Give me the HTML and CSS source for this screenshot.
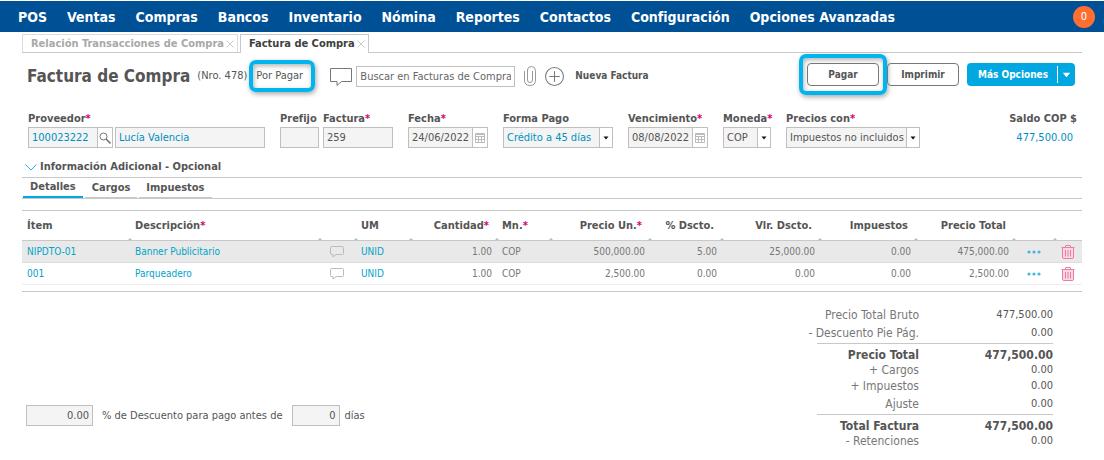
FILE: index.html
```html
<!DOCTYPE html>
<html lang="es">
<head>
<meta charset="utf-8">
<meta name="viewport" content="width=device-width, initial-scale=1">
<title>Factura de Compra</title>
<link rel="stylesheet" href="styles.css">
</head>
<body>
<svg class="defs" aria-hidden="true">
  <symbol id="i-bubble" viewBox="0 0 22 19"><path d="M.5 1.500h21v13H11.500l-4.500 4v-4H.5z" fill="none" stroke="currentColor"/></symbol>
  <symbol id="i-note" viewBox="0 0 14 12"><path d="M2 .5h10.500q1 0 1 1v6q0 1-1 1H6l-3 2.500V8.500H2q-1.500 0-1.500-1v-6q0-1 1.500-1z" fill="none" stroke="currentColor"/></symbol>
  <symbol id="i-cal" viewBox="0 0 10 10"><path d="M.5.5h9v9h-9zM.5 1.500h9M.5 3.500h9M.5 6.500h9M3.500 3.500v6M6.500 3.500v6" fill="none" stroke="currentColor"/></symbol>
  <symbol id="i-trash" viewBox="0 0 14 14"><path d="M1.500 2.500h11V12q0 1.500-1.500 1.500H3Q1.500 13.500 1.500 12z" fill="#fbd9e2"/><path d="M.5 2.500h13M4.500 2.500V1q0-.5.500-.5h4q.5 0 .5.500v1.500M1.500 2.500V12q0 1.500 1.500 1.500h8q1.500 0 1.500-1.500V2.500M4.500 5v6.500M7 5v6.500M9.500 5v6.500" fill="none" stroke="currentColor"/></symbol>
  <symbol id="i-dots" viewBox="0 0 14 4"><g fill="currentColor"><circle cx="2" cy="2" r="1.600"/><circle cx="7" cy="2" r="1.600"/><circle cx="12" cy="2" r="1.600"/></g></symbol>
  <symbol id="i-arrow" viewBox="0 0 6 4"><path d="M.5.5h5L3 3.500z" fill="currentColor"/></symbol>
</svg>
<nav class="nav">
  <a href="#">POS</a><a href="#">Ventas</a><a href="#">Compras</a><a href="#">Bancos</a><a href="#">Inventario</a><a href="#">Nómina</a><a href="#">Reportes</a><a href="#">Contactos</a><a href="#">Configuración</a><a href="#">Opciones Avanzadas</a>
  <button class="count" type="button">0</button>
</nav>
<main class="page">
  <div class="doctabs">
    <div class="doctab"><a href="#">Relación Transacciones de Compra</a><button class="close" type="button" aria-label="Cerrar"><svg viewBox="0 0 8 8"><path d="M.5.5l7 7M7.500.5l-7 7"/></svg></button></div>
    <div class="doctab current"><a href="#">Factura de Compra</a><button class="close" type="button" aria-label="Cerrar"><svg viewBox="0 0 8 8"><path d="M.5.5l7 7M7.500.5l-7 7"/></svg></button></div>
  </div>

  <header class="head">
    <h1>Factura de Compra</h1>
    <span class="number">(Nro. 478)</span>
    <span class="status glow">Por Pagar</span>
    <button class="icon comment" type="button" aria-label="Comentarios"><svg><use href="#i-bubble"/></svg></button>
    <input class="search" type="text" aria-label="Buscar en Facturas de Compra" placeholder="Buscar en Facturas de Compra">
    <button class="icon clip" type="button" aria-label="Adjuntar"><svg viewBox="0 0 12 20"><path d="M3.500 5v9q0 2.500 2.500 2.500T8.500 14V4Q8.500.5 4.500.5T.5 4.500V14q0 5.500 5.500 5.500t5.500-5.500V5" transform="translate(12 0) scale(-1 1)"/></svg></button>
    <button class="new" type="button"><svg viewBox="0 0 18 18"><circle cx="9" cy="9" r="8.500"/><path d="M9 4v10M4 9h10"/></svg>Nueva Factura</button>
    <div class="actions">
      <span class="glow pay"><button class="btn" type="button">Pagar</button></span>
      <button class="btn" type="button">Imprimir</button>
      <button class="more" type="button"><span>Más Opciones</span><i><svg><use href="#i-arrow"/></svg></i></button>
    </div>
  </header>

  <form class="fields">
    <div class="field supplier">
      <label for="prov">Proveedor<b>*</b></label>
      <div class="pair">
        <span class="box code"><input class="link" id="prov" type="text" value="100023222"><button type="button" aria-label="Buscar proveedor"><svg class="lens" viewBox="0 0 12 12"><circle cx="4.500" cy="4.500" r="3.500"/><path d="M7 7l4.500 4.500" stroke-width="1.600"/></svg></button></span>
        <span class="box name"><input class="link" type="text" aria-label="Nombre del proveedor" value="Lucía Valencia"></span>
      </div>
    </div>
    <div class="field prefix"><label for="pre">Prefijo</label><span class="box"><input id="pre" type="text"></span></div>
    <div class="field invoice"><label for="fac">Factura<b>*</b></label><span class="box"><input id="fac" type="text" value="259"></span></div>
    <div class="field date"><label for="fec">Fecha<b>*</b></label><span class="box"><input id="fec" type="text" value="24/06/2022"><button type="button" aria-label="Elegir fecha"><svg class="cal"><use href="#i-cal"/></svg></button></span></div>
    <div class="field terms"><label for="for">Forma Pago</label><span class="box"><select class="link" id="for"><option>Crédito a 45 días</option></select><i><svg class="arrow"><use href="#i-arrow"/></svg></i></span></div>
    <div class="field date"><label for="ven">Vencimiento<b>*</b></label><span class="box"><input id="ven" type="text" value="08/08/2022"><button type="button" aria-label="Elegir vencimiento"><svg class="cal"><use href="#i-cal"/></svg></button></span></div>
    <div class="field currency"><label for="mon">Moneda<b>*</b></label><span class="box"><select id="mon"><option>COP</option></select><i><svg class="arrow"><use href="#i-arrow"/></svg></i></span></div>
    <div class="field prices"><label for="pcon">Precios con<b>*</b></label><span class="box"><select id="pcon"><option>Impuestos no incluidos</option></select><i><svg class="arrow"><use href="#i-arrow"/></svg></i></span></div>
    <div class="field balance"><span class="cap">Saldo COP $</span><a href="#">477,500.00</a></div>
  </form>

  <button class="extra" type="button"><svg viewBox="0 0 12 7"><path d="M.5.5L6 6l5.500-5.500"/></svg>Información Adicional - Opcional</button>

  <div class="subtabs">
    <button class="on" type="button">Detalles</button><button type="button">Cargos</button><button type="button">Impuestos</button>
  </div>

  <div class="tablewrap">
  <table class="items">
    <colgroup><col class="w108"><col class="w190"><col class="w36"><col class="w55"><col class="w86"><col class="w54"><col class="w99"><col class="w72"><col class="w98"><col class="w96"><col class="w98"><col class="w41"><col class="w27"></colgroup>
    <thead><tr>
      <th>Ítem</th><th>Descripción<b>*</b></th><th></th><th>UM</th><th class="r">Cantidad<b>*</b></th><th>Mn.<b>*</b></th><th class="r">Precio Un.<b>*</b></th><th class="r">% Dscto.</th><th class="r">Vlr. Dscto.</th><th class="r">Impuestos</th><th class="r">Precio Total</th><th></th><th></th>
    </tr></thead>
    <tbody>
    <tr class="sel">
      <td><a href="#">NIPDTO-01</a></td><td><a href="#">Banner Publicitario</a></td><td class="c"><button class="icon" type="button" aria-label="Nota"><svg class="note"><use href="#i-note"/></svg></button></td><td><a href="#">UNID</a></td><td class="r">1.00</td><td>COP</td><td class="r">500,000.00</td><td class="r">5.00</td><td class="r">25,000.00</td><td class="r">0.00</td><td class="r">475,000.00</td><td class="c"><button class="icon" type="button" aria-label="Más"><svg class="dots"><use href="#i-dots"/></svg></button></td><td class="c"><button class="icon" type="button" aria-label="Eliminar"><svg class="trash"><use href="#i-trash"/></svg></button></td>
    </tr>
    <tr>
      <td><a href="#">001</a></td><td><a href="#">Parqueadero</a></td><td class="c"><button class="icon" type="button" aria-label="Nota"><svg class="note"><use href="#i-note"/></svg></button></td><td><a href="#">UNID</a></td><td class="r">1.00</td><td>COP</td><td class="r">2,500.00</td><td class="r">0.00</td><td class="r">0.00</td><td class="r">0.00</td><td class="r">2,500.00</td><td class="c"><button class="icon" type="button" aria-label="Más"><svg class="dots"><use href="#i-dots"/></svg></button></td><td class="c"><button class="icon" type="button" aria-label="Eliminar"><svg class="trash"><use href="#i-trash"/></svg></button></td>
    </tr>
    </tbody>
  </table>
  </div>

  <footer class="foot">
    <div class="discount">
      <span class="box pct"><input id="pct" type="text" value="0.00"></span>
      <label for="pct">% de Descuento para pago antes de</label>
      <span class="box days"><input id="dias" type="text" value="0"></span>
      <label for="dias">días</label>
    </div>
    <dl class="totals">
      <div><dt>Precio Total Bruto</dt><dd>477,500.00</dd></div>
      <div><dt>- Descuento Pie Pág.</dt><dd>0.00</dd></div>
      <div class="sum"><dt>Precio Total</dt><dd>477,500.00</dd></div>
      <div class="tight"><dt>+ Cargos</dt><dd>0.00</dd></div>
      <div><dt>+ Impuestos</dt><dd>0.00</dd></div>
      <div><dt>Ajuste</dt><dd>0.00</dd></div>
      <div class="sum"><dt>Total Factura</dt><dd>477,500.00</dd></div>
      <div class="tight"><dt>- Retenciones</dt><dd>0.00</dd></div>
    </dl>
  </footer>
</main>
</body>
</html>
```

FILE: styles.css
```css
* { box-sizing: border-box; }
body {
  margin: 0;
  padding-top: 1px;
  background: #fff;
  color: #555;
  font: 11px/14px "DejaVu Sans Condensed", "DejaVu Sans", sans-serif;
}
button, input, select { font: inherit; color: inherit; margin: 0; }
button { padding: 0; border: 0; background: none; cursor: pointer; }
a { color: inherit; text-decoration: none; }
svg { display: block; }
.defs { position: absolute; width: 0; height: 0; }
label b, th b { color: #d6006d; font-weight: bold; }

.nav {
  display: flex;
  align-items: center;
  gap: 20px;
  height: 31px;
  padding: 0 9px 0 18px;
  background: #005096;
  color: #fff;
  font-size: 14px;
  font-weight: bold;
  white-space: nowrap;
}
.count {
  width: 22px;
  height: 22px;
  margin-left: auto;
  border-radius: 50%;
  background: #ff6f31;
  font-size: 11px;
  font-weight: normal;
}

.page { padding: 2px 22px 0; }
.doctabs {
  display: flex;
  gap: 2px;
  border-bottom: 1px solid #c8c8c8;
}
.doctab {
  display: flex;
  align-items: center;
  gap: 2px;
  height: 18px;
  padding: 0 3px 0 8px;
  border: 1px solid #dcdcdc;
  border-bottom: 0;
  color: #a8a8a8;
  font-weight: bold;
  white-space: nowrap;
}
.doctab.current {
  height: 19px;
  margin-bottom: -1px;
  border-color: #c8c8c8;
  background: #fff;
  color: #404040;
}
.close svg { width: 8px; height: 8px; fill: none; stroke: #ccc; }

.head {
  display: flex;
  align-items: center;
  height: 46px;
  padding: 0 7px 0 5px;
  white-space: nowrap;
}
h1 { margin: 0; font-size: 17px; line-height: 22px; }
.number { margin-left: 7px; }
.glow {
  border: 4px solid #00b4f0;
  border-radius: 7px;
  box-shadow: 1px 2px 5px rgba(0, 0, 0, .35), inset 1px 2px 5px rgba(0, 0, 0, .3);
}
.status { width: 66px; margin-left: 2px; padding: 5px 3px; }
.icon { color: #777; }
.comment { margin-left: 15px; }
.comment svg { width: 22px; height: 19px; }
.search {
  width: 159px;
  height: 21px;
  margin-left: 4px;
  padding: 0 3px;
  border: 1px solid #c0c0c0;
  background: #fff;
}
.search::placeholder { color: #666; opacity: 1; }
.clip { margin-left: 9px; }
.clip svg { width: 12px; height: 20px; fill: none; stroke: #999; }
.new {
  display: flex;
  align-items: center;
  gap: 11px;
  margin-left: 9px;
  font-size: 10px;
  font-weight: bold;
}
.new svg { width: 19px; height: 19px; fill: none; stroke: #75797d; }
.actions { display: flex; align-items: center; gap: 8px; margin-left: auto; padding-bottom: 3px; }
.pay { margin-right: -8px; padding: 5px 4px; }
.btn {
  display: block;
  width: 72px;
  height: 23px;
  border: 1px solid #777;
  border-radius: 4px;
  font-size: 10px;
  font-weight: bold;
}
.more {
  display: flex;
  align-items: center;
  justify-content: space-between;
  width: 108px;
  height: 23px;
  padding-left: 11px;
  border-radius: 4px;
  background: #00a7e1;
  color: #fff;
  font-size: 10px;
  font-weight: bold;
}
.more i { display: grid; place-items: center; width: 18px; height: 17px; border-left: 1px solid #fff; }
.more svg { width: 9px; height: 6px; }

.fields {
  display: flex;
  align-items: flex-start;
  gap: 15px;
  padding: 13px 5px 0 6px;
}
.field label, .cap { display: block; height: 15px; font-weight: bold; white-space: nowrap; }
.box {
  display: flex;
  height: 21px;
  border: 1px solid #bfbfbf;
  background: #f4f4f4;
}
.box input, .box select {
  flex: 1;
  min-width: 0;
  width: 0;
  padding: 0 0 0 3px;
  border: 0;
  border-radius: 0;
  background: none;
  appearance: none;
  color: #555;
}
.box .link { color: #0090c0; }
.box button, .box i {
  display: grid;
  place-items: center;
  flex: none;
  width: 15px;
  border-left: 1px solid #bfbfbf;
  background: #fff;
}
.box i { width: 13px; pointer-events: none; color: #111; }
.pair { display: flex; gap: 2px; }
.supplier { width: 237px; }
.code { width: 85px; }
.name { flex: 1; }
.lens { width: 12px; height: 12px; fill: none; stroke: #777; }
.cal { width: 10px; height: 10px; color: #bbb; }
.arrow { width: 6px; height: 4px; }
.prefix { width: 39px; margin-right: -11px; }
.invoice { width: 70px; }
.date { width: 80px; }
.terms { width: 110px; }
.currency { width: 48px; }
.prices { width: 134px; }
.balance { margin-left: auto; text-align: right; }
.balance a { display: block; padding: 4px 4px 0 0; color: #0090c0; }

.extra {
  display: flex;
  align-items: center;
  gap: 3px;
  margin-top: 12px;
  padding-left: 3px;
  font-weight: bold;
  line-height: 14px;
}
.extra svg { width: 12px; height: 7px; fill: none; stroke: #2ab3e6; }
.subtabs {
  display: flex;
  gap: 2px;
  margin-top: 3px;
  padding-left: 1px;
  border-top: 1px solid #c8c8c8;
  border-bottom: 1px solid #c8c8c8;
}
.subtabs button {
  height: 20px;
  padding: 0 7px;
  border-bottom: 1px solid #c8c8c8;
  font-weight: bold;
}
.subtabs .on { border-bottom: 2px solid #00a9e0; }

.tablewrap { margin-top: 11px; padding-bottom: 6px; border-bottom: 1px solid #c8c8c8; }
.items {
  width: 100%;
  table-layout: fixed;
  border-collapse: separate;
  border-spacing: 0;
  border-top: 1px solid #c8c8c8;
  white-space: nowrap;
}
.w108 { width: 108px; } .w190 { width: 190px; } .w36 { width: 36px; } .w55 { width: 55px; }
.w86 { width: 86px; } .w54 { width: 54px; } .w99 { width: 99px; } .w72 { width: 72px; }
.w98 { width: 98px; } .w96 { width: 96px; } .w41 { width: 41px; } .w27 { width: 27px; }
th, td { padding: 1px 5px 0; text-align: left; }
th {
  position: relative;
  height: 30px;
  border-bottom: 1px solid #c8c8c8;
}
th:not(:last-child)::after {
  content: "";
  position: absolute;
  right: -2px;
  bottom: 0;
  border: 2px solid transparent;
  border-top: 0;
  border-bottom-color: #bbb;
}
td {
  height: 22px;
  border-bottom: 1px solid #eee;
  color: #777;
  font-size: 10px;
}
td a { color: #00a3c8; }
.sel td { background: #e9e9e9; border-bottom-color: #ddd; }
.r { text-align: right; }
th.r { padding-right: 8px; }
td.c { padding: 0 2px 0 0; text-align: center; }
td .icon { display: block; margin: 0 auto; }
.note { width: 14px; height: 12px; color: #bbb; }
.dots { width: 14px; height: 4px; color: #45b8da; }
.trash { width: 14px; height: 14px; color: #f07b9e; }

.foot {
  display: flex;
  justify-content: space-between;
  align-items: flex-end;
  padding: 14px 29px 0 4px;
}
.discount { display: flex; align-items: center; margin-bottom: 22px; white-space: nowrap; }
.discount input { padding-right: 3px; text-align: right; }
.pct { width: 67px; margin-right: 9px; }
.days { width: 48px; margin: 0 5px 0 9px; }
.totals { width: 236px; margin: 0; color: #777; }
.totals div {
  display: grid;
  grid-template-columns: 102px 1fr;
  justify-content: end;
  align-items: center;
  height: 18px;
  white-space: nowrap;
}
.totals dt { justify-self: end; font-size: 12px; }
.totals dd { justify-self: end; margin: 0; color: #555; }
.totals .sum {
  height: 19px;
  margin-top: 1px;
  padding-top: 4px;
  border-top: 1px solid #c8c8c8;
  color: #555;
  font-size: 12px;
  font-weight: bold;
}
.totals .tight { height: 15px; }
```
